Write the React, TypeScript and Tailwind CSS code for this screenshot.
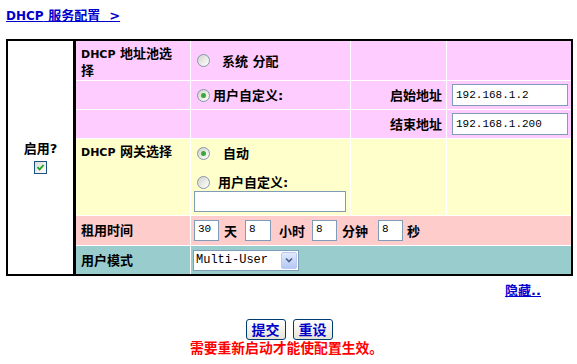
import React from 'react';

const FONT = "font-['DejaVu_Sans','Noto_Sans_CJK_SC',sans-serif]";

const Radio = ({ checked }: { checked?: boolean }) => (
  <span className="inline-flex shrink-0 items-center justify-center w-[13px] h-[13px] rounded-full border border-[#8796a6] bg-linear-to-br from-[#d3d3cc] to-white">
    {checked && <span className="w-[5px] h-[5px] rounded-full bg-[#3aa83a]" />}
  </span>
);

const Box = ({ value, className = '' }: { value?: string; className?: string }) => (
  <div
    className={`shrink-0 border border-[#7f9db9] bg-white flex items-center px-[3px] font-['Liberation_Mono',monospace] text-[11px] text-black whitespace-nowrap ${className}`}
  >
    {value}
  </div>
);

const Label = ({ children }: { children: React.ReactNode }) => (
  <span className="font-bold text-[13px] leading-[15px] text-black">{children}</span>
);

export default function App() {
  return (
    <div className={`w-[577px] h-[364px] bg-white ${FONT}`}>
      <div className="pl-[6px] pt-[3px] h-[39px]">
        <a className="text-[#0000cc] font-bold text-[13px] underline leading-[16px]">
          <span className="text-[12px]">DHCP</span> 服务配置 &nbsp;&gt;
        </a>
      </div>

      <div className="ml-[6px] w-[567px] border-2 border-black flex">
        <div className="w-[65px] bg-white flex flex-col items-center justify-center">
          <Label>启用?</Label>
          <span className="mt-[5px] w-[13px] h-[13px] border border-[#1c5180] bg-linear-to-br from-[#dcdcd4] to-white flex items-center justify-center">
            <svg width="9" height="9" viewBox="0 0 9 9">
              <path d="M1.5 4.2 L3.6 6.4 L7.6 2" fill="none" stroke="#21a121" strokeWidth="1.8" />
            </svg>
          </span>
        </div>
        <div className="w-[3px] bg-black" />
        <div className="grid grid-cols-[114px_159px_95px_124px] grid-rows-[39px_28px_28px_76px_29px_28px] gap-px bg-white">
          {/* row 1 */}
          <div className="bg-[#ffccff] pl-[5px] pt-[4px] pr-[14px] leading-[15px]">
            <Label>
              <span className="text-[11px]">DHCP</span> 地址池选择
            </Label>
          </div>
          <div className="bg-[#ffccff] flex items-center pl-[6px]">
            <Radio />
            <span className="ml-[12px]">
              <Label>系统 分配</Label>
            </span>
          </div>
          <div className="bg-[#ffccff]" />
          <div className="bg-[#ffccff]" />

          {/* row 2 */}
          <div className="bg-[#ffccff]" />
          <div className="bg-[#ffccff] flex items-center pl-[6px]">
            <Radio checked />
            <span className="ml-[3px]">
              <Label>用户自定义:</Label>
            </span>
          </div>
          <div className="bg-[#ffccff] flex items-center justify-end pr-[4px]">
            <Label>启始地址</Label>
          </div>
          <div className="bg-[#ffccff] flex items-center pl-[5px]">
            <Box value="192.168.1.2" className="w-[116px] h-[22px]" />
          </div>

          {/* row 3 */}
          <div className="bg-[#ffccff]" />
          <div className="bg-[#ffccff]" />
          <div className="bg-[#ffccff] flex items-center justify-end pr-[4px]">
            <Label>结束地址</Label>
          </div>
          <div className="bg-[#ffccff] flex items-center pl-[5px]">
            <Box value="192.168.1.200" className="w-[116px] h-[22px]" />
          </div>

          {/* gateway */}
          <div className="bg-[#ffffcc] pl-[5px] pt-[4px] leading-[15px]">
            <Label>
              <span className="text-[11px]">DHCP</span> 网关选择
            </Label>
          </div>
          <div className="bg-[#ffffcc] pl-[3px] pt-[7px] flex flex-col">
            <div className="h-[14px] flex items-center pl-[3px]">
              <Radio checked />
              <span className="ml-[13px]">
                <Label>自动</Label>
              </span>
            </div>
            <div className="h-[14px] mt-[15px] flex items-center pl-[3px]">
              <Radio />
              <span className="ml-[8px]">
                <Label>用户自定义:</Label>
              </span>
            </div>
            <Box className="mt-[2px] w-[152px] h-[21px]" />
          </div>
          <div className="bg-[#ffffcc]" />
          <div className="bg-[#ffffcc]" />

          {/* lease */}
          <div className="bg-[#ffcccc] pl-[5px] flex items-center">
            <Label>租用时间</Label>
          </div>
          <div className="col-span-3 bg-[#ffcccc] flex items-center pl-[3px]">
            <Box value="30" className="w-[25px] h-[21px] !items-start text-[10px]" />
            <span className="ml-[5px]"><Label>天</Label></span>
            <Box value="8" className="ml-[8px] w-[26px] h-[21px] !items-start text-[10px]" />
            <span className="ml-[8px]"><Label>小时</Label></span>
            <Box value="8" className="ml-[7px] w-[25px] h-[21px] !items-start text-[10px]" />
            <span className="ml-[5px]"><Label>分钟</Label></span>
            <Box value="8" className="ml-[10px] w-[25px] h-[21px] !items-start text-[10px]" />
            <span className="ml-[4px]"><Label>秒</Label></span>
          </div>

          {/* user mode */}
          <div className="bg-[#99cccc] pl-[5px] flex items-center">
            <Label>用户模式</Label>
          </div>
          <div className="col-span-3 bg-[#99cccc] flex items-center pl-[2px]">
            <div className="w-[106px] h-[21px] border border-[#7f9db9] bg-white flex items-center">
              <span className="flex-1 pl-[2px] font-['Liberation_Mono',monospace] text-[12px] text-black whitespace-nowrap">
                Multi-User
              </span>
              <span className="w-[16px] h-[17px] mr-[1px] rounded-[2px] bg-linear-to-b from-[#e1eafe] to-[#b4c8f6] border border-[#b9cbf3] flex items-center justify-center">
                <svg width="8" height="6" viewBox="0 0 8 6">
                  <path d="M1 1.5 L4 4.5 L7 1.5" fill="none" stroke="#4d6185" strokeWidth="1.6" />
                </svg>
              </span>
            </div>
          </div>
        </div>
      </div>

      <div className="w-[541px] h-[16px] mt-[6px] text-right leading-[16px]">
        <a className="text-[#0000cc] font-bold text-[13px] underline">隐藏..</a>
      </div>

      <div className="flex justify-center gap-[7px] mt-[21px] pl-[1px]">
        <button className="w-[40px] h-[21px] rounded-[3px] border border-[#003c74] bg-linear-to-b from-white to-[#e6e3d6] text-[#0000cc] font-bold text-[14px] leading-none">
          提交
        </button>
        <button className="w-[40px] h-[21px] rounded-[3px] border border-[#003c74] bg-linear-to-b from-white to-[#e6e3d6] text-[#0000cc] font-bold text-[14px] leading-none">
          重设
        </button>
      </div>
      <div className="text-center text-[#ff0000] font-bold text-[13.8px] leading-[16px] pr-[4px]">
        需要重新启动才能使配置生效。
      </div>
    </div>
  );
}
